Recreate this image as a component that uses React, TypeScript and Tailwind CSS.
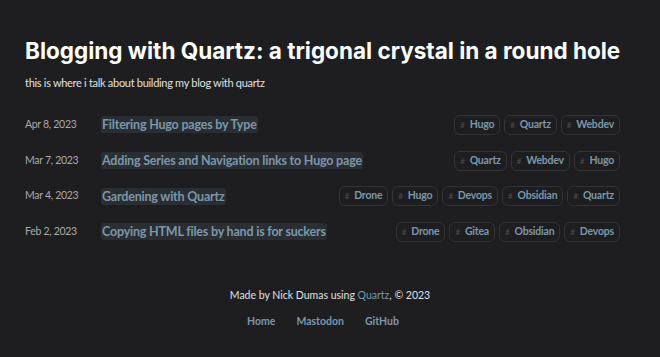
const posts = [
  { date: 'Apr 8, 2023', title: 'Filtering Hugo pages by Type', tags: ['Hugo', 'Quartz', 'Webdev'] },
  { date: 'Mar 7, 2023', title: 'Adding Series and Navigation links to Hugo page', tags: ['Quartz', 'Webdev', 'Hugo'] },
  { date: 'Mar 4, 2023', title: 'Gardening with Quartz', tags: ['Drone', 'Hugo', 'Devops', 'Obsidian', 'Quartz'] },
  { date: 'Feb 2, 2023', title: 'Copying HTML files by hand is for suckers', tags: ['Drone', 'Gitea', 'Obsidian', 'Devops'] },
];

const body = { fontFamily: '"Lato", "Noto Sans", sans-serif' };

const Tag = ({ name }: { name: string }) => (
  <span className="flex h-[20px] items-center rounded-md border border-[#333336] px-[5px] text-[10.5px] font-bold tracking-[-0.2px] text-[#7b97aa]">
    <span className="mr-[5px] text-[8px] font-normal text-[#4e4e4e]">#</span>
    {name}
  </span>
);

export default function App() {
  return (
    <div className="min-h-[357px] w-full bg-[#1e1e21] pl-[25px] pr-[40px] pt-[37px] text-[#d4d4d4]" style={body}>
      <h1
        className="whitespace-nowrap text-[22.5px] font-bold leading-[27px] text-[#fbfffe]"
        style={{ fontFamily: '"Inter", sans-serif' }}
      >
        Blogging with Quartz: a trigonal crystal in a round hole
      </h1>
      <p className="mt-[11px] text-[11px] leading-[16px] tracking-[-0.3px] text-[#e0e0e0]">
        this is where i talk about building my blog with quartz
      </p>

      <ul className="mt-[16px] flex flex-col">
        {posts.map((p) => (
          <li key={p.title} className="flex h-[35.7px] items-center">
            <span className="w-[76px] text-[10.5px] tracking-[-0.3px] text-[#aaaaaa]">{p.date}</span>
            <a className="rounded-[3px] bg-[#2a2e33] px-[1px] text-[12.5px] font-bold leading-[17px] tracking-[-0.2px] text-[#7b97aa]">
              {p.title}
            </a>
            <div className="ml-auto flex gap-[4px]">
              {p.tags.map((t) => (
                <Tag key={t} name={t} />
              ))}
            </div>
          </li>
        ))}
      </ul>

      <footer className="-mr-[15px] mt-[38px] flex flex-col items-center">
        <p className="text-[10.5px] leading-[14px] text-[#e0e0e0]">
          Made by Nick Dumas using <span className="text-[#7b97aa]">Quartz</span>, © 2023
        </p>
        <nav className="mt-[12px] flex gap-[21px] pr-[14px] text-[10.5px] font-bold text-[#7b97aa]">
          <a>Home</a>
          <a>Mastodon</a>
          <a>GitHub</a>
        </nav>
      </footer>
    </div>
  );
}
